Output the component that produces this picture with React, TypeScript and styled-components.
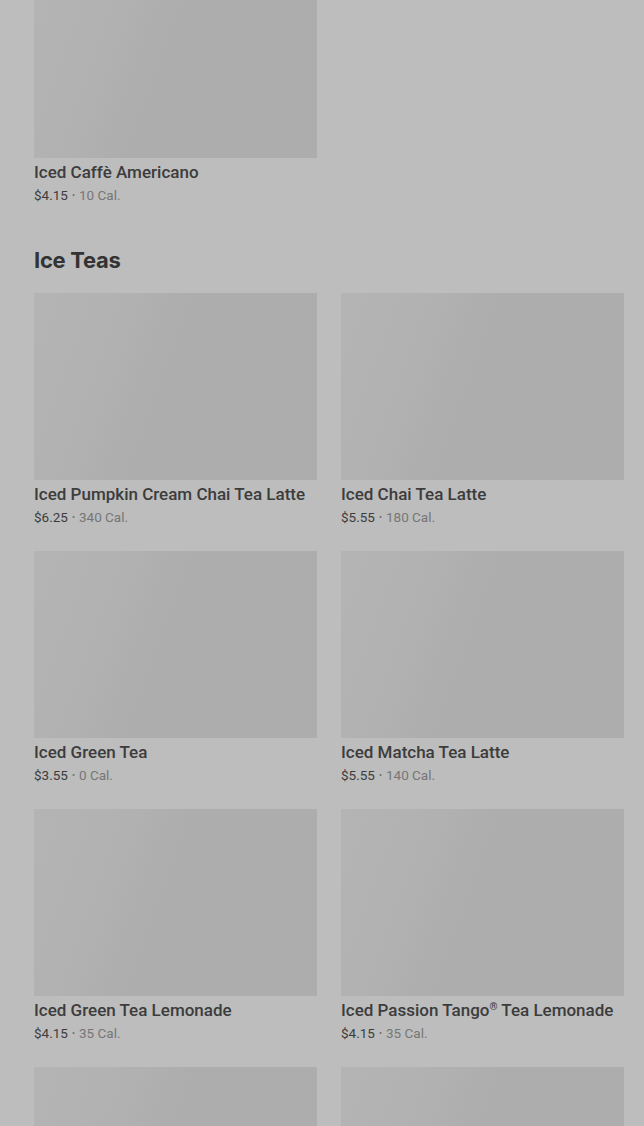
import styled, { createGlobalStyle } from 'styled-components';
import { FC } from 'react';

type MenuItem = {
	name: string;
	price: string;
	calories: number;
};

type Section = {
	title?: string;
	items: MenuItem[];
	// cards whose details are still below the fold
	pending?: number;
};

const SECTIONS: Section[] = [
	{
		items: [{ name: 'Iced Caffè Americano', price: '$4.15', calories: 10 }],
	},
	{
		title: 'Ice Teas',
		items: [
			{ name: 'Iced Pumpkin Cream Chai Tea Latte', price: '$6.25', calories: 340 },
			{ name: 'Iced Chai Tea Latte', price: '$5.55', calories: 180 },
			{ name: 'Iced Green Tea', price: '$3.55', calories: 0 },
			{ name: 'Iced Matcha Tea Latte', price: '$5.55', calories: 140 },
			{ name: 'Iced Green Tea Lemonade', price: '$4.15', calories: 35 },
			{ name: 'Iced Passion Tango® Tea Lemonade', price: '$4.15', calories: 35 },
		],
		pending: 2,
	},
];

const GlobalStyle = createGlobalStyle`
	html, body {
		margin: 0;
		padding: 0;
		background: #bdbdbd;
		overflow: hidden;
	}
	body {
		font-family: Roboto, 'Liberation Sans', sans-serif;
	}
`;

// small raised ® like the menu's typography
const renderName = (name: string) =>
	name.split('®').map((part, i, arr) => (
		<span key={i}>
			{part}
			{i < arr.length - 1 && <Reg>®</Reg>}
		</span>
	));

const ProductCard: FC<{ item: MenuItem }> = ({ item }) => (
	<Card>
		<Thumb />
		<Name>{renderName(item.name)}</Name>
		<PriceLine>
			<Price>{item.price}</Price>
			<Dot>•</Dot>
			<Calories>{item.calories} Cal.</Calories>
		</PriceLine>
	</Card>
);

const App: FC = () => (
	<>
		<GlobalStyle />
		<Page>
			{SECTIONS.map((section, i) => (
				<MenuSection key={i}>
					{section.title && <SectionTitle>{section.title}</SectionTitle>}
					<Grid>
						{section.items.map((item) => (
							<ProductCard key={item.name} item={item} />
						))}
						{Array.from({ length: section.pending ?? 0 }).map((_, j) => (
							<Card key={`pending-${j}`}>
								<Thumb />
							</Card>
						))}
					</Grid>
				</MenuSection>
			))}
		</Page>
	</>
);

const Page = styled.main`
	display: flex;
	flex-direction: column;
	gap: 40px;
	padding: 0 20px 0 34px;
	margin-top: -29px;
	height: 1155px;
	overflow: hidden;
`;

const MenuSection = styled.section`
	display: flex;
	flex-direction: column;
`;

const SectionTitle = styled.h2`
	margin: 0 0 17px;
	font-family: Inter, 'Liberation Sans', sans-serif;
	font-size: 22px;
	font-weight: 700;
	line-height: 32px;
	letter-spacing: -0.3px;
	color: #333333;
`;

const Grid = styled.div`
	display: grid;
	grid-template-columns: 283px 283px;
	column-gap: 24px;
	row-gap: 25px;
`;

const Card = styled.div`
	display: flex;
	flex-direction: column;
`;

const Thumb = styled.div`
	height: 187px;
	background: linear-gradient(110deg, #b4b4b4 0%, #b1b1b1 30%, #adadad 45%, #adadad 100%);
`;

const Name = styled.div`
	margin-top: 4px;
	font-size: 17px;
	font-weight: 500;
	line-height: 20px;
	color: #3c3c3c;
	white-space: nowrap;
`;

const Reg = styled.span`
	font-size: 0.6em;
	vertical-align: 0.55em;
	line-height: 0;
`;

const PriceLine = styled.div`
	display: flex;
	align-items: center;
	gap: 4px;
	margin-top: 4px;
	font-size: 13.5px;
	line-height: 18px;
`;

const Price = styled.span`
	color: #3c3c3c;
`;

const Dot = styled.span`
	color: #6e6e6e;
	font-size: 9px;
`;

const Calories = styled.span`
	color: #767676;
`;

export default App;
